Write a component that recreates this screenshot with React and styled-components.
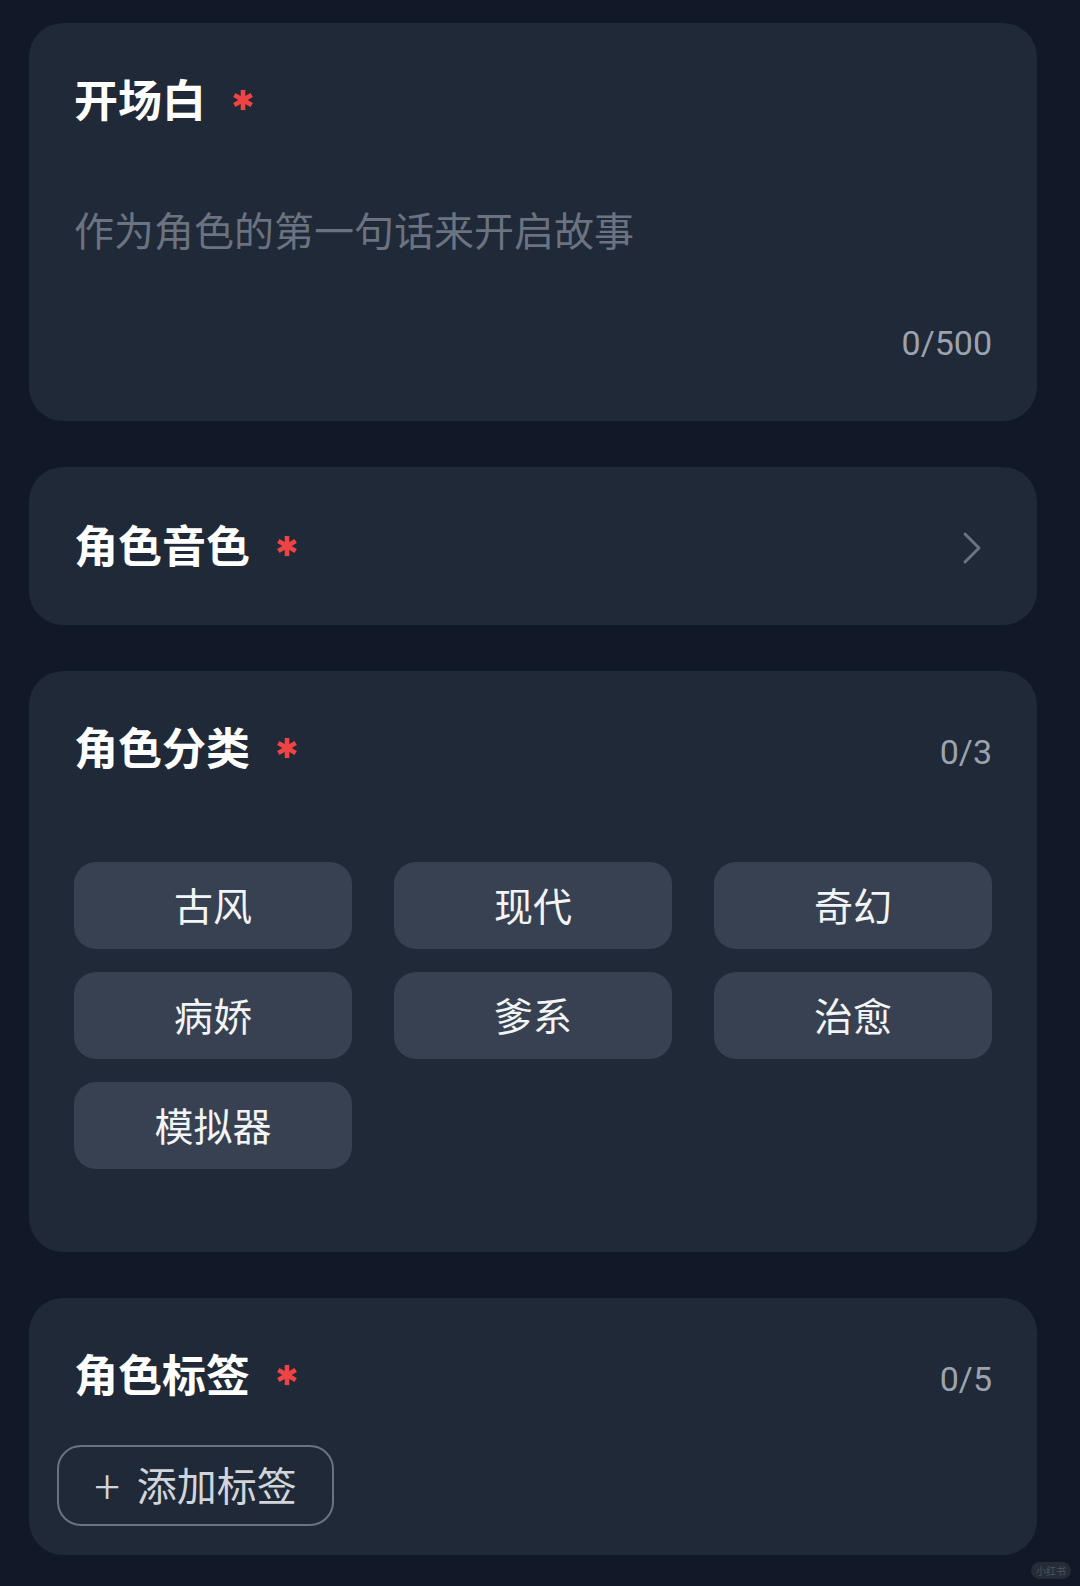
import React from 'react'
import styled, {createGlobalStyle} from 'styled-components'

const categories = ['古风', '现代', '奇幻', '病娇', '爹系', '治愈', '模拟器']

const Required = () => (
  <Star width='24' height='24' viewBox='0 0 24 24'>
    <g stroke='#ef4444' strokeWidth='5' strokeLinecap='butt'>
      <line x1='12' y1='1' x2='12' y2='23' />
      <line x1='2.5' y1='6.5' x2='21.5' y2='17.5' />
      <line x1='2.5' y1='17.5' x2='21.5' y2='6.5' />
    </g>
  </Star>
)

const App = () => {
  return (
    <>
      <GlobalStyle />
      <Page>
        <Card pad='45px 45px 55px'>
          <TitleRow>
            <Title>开场白</Title>
            <Required />
          </TitleRow>
          <Placeholder>作为角色的第一句话来开启故事</Placeholder>
          <Counter bottom>0/500</Counter>
        </Card>

        <VoiceCard>
          <TitleRow>
            <Title>角色音色</Title>
            <Required />
          </TitleRow>
          <Chevron width='20' height='34' viewBox='0 0 20 34'>
            <polyline points='3,3 17,17 3,31' fill='none' stroke='#6b7280' strokeWidth='3' strokeLinecap='round' strokeLinejoin='round' />
          </Chevron>
        </VoiceCard>

        <Card pad='45px 45px 83px'>
          <Header>
            <TitleRow>
              <Title>角色分类</Title>
              <Required />
            </TitleRow>
            <Counter>0/3</Counter>
          </Header>
          <ChipGrid>
            {categories.map(c => (
              <Chip key={c}>{c}</Chip>
            ))}
          </ChipGrid>
        </Card>

        <Card pad='45px 45px 29px'>
          <Header>
            <TitleRow>
              <Title>角色标签</Title>
              <Required />
            </TitleRow>
            <Counter>0/5</Counter>
          </Header>
          <AddButton>
            <Plus>+</Plus>
            添加标签
          </AddButton>
        </Card>

        <Watermark>小红书</Watermark>
      </Page>
    </>
  )
}

const GlobalStyle = createGlobalStyle`
  html, body {
    margin: 0;
    padding: 0;
    background: #111827;
  }
  body {
    font-family: "Noto Sans CJK SC", "Noto Sans", sans-serif;
  }
`

const Page = styled.div`
  position: relative;
  width: 1080px;
  min-height: 1586px;
  box-sizing: border-box;
  padding: 23px 43px 32px 29px;
  background: #111827;
  display: flex;
  flex-direction: column;
  gap: 46px;
`

const Card = styled.div`
  background: #1f2937;
  border-radius: 34px;
  padding: ${p => p.pad};
  display: flex;
  flex-direction: column;
`

const VoiceCard = styled.div`
  background: #1f2937;
  border-radius: 34px;
  height: 158px;
  box-sizing: border-box;
  padding: 0 55px 4px 45px;
  display: flex;
  align-items: center;
  justify-content: space-between;
`

const Header = styled.div`
  display: flex;
  align-items: center;
  justify-content: space-between;
  height: 60px;
`

const TitleRow = styled.div`
  display: flex;
  align-items: center;
  height: 60px;
`

const Title = styled.h2`
  margin: 0;
  font-size: 44px;
  line-height: 60px;
  font-weight: 700;
  color: #ffffff;
`

const Star = styled.svg`
  display: block;
  margin-left: 26px;
  margin-top: 4px;
  width: 22px;
  height: 22px;
`

const Placeholder = styled.div`
  margin-top: 73px;
  font-size: 40px;
  line-height: 56px;
  color: #6b7280;
`

const Counter = styled.div`
  margin-top: 12px;
  font-family: Roboto, "Noto Sans CJK SC", sans-serif;
  font-size: 34px;
  line-height: 46px;
  color: #9ca3af;
  ${p => p.bottom && `
    margin-top: 63px;
    margin-bottom: 0;
    align-self: flex-end;
  `}
`

const Chevron = styled.svg`
  display: block;
  margin-top: 8px;
`

const ChipGrid = styled.div`
  margin-top: 86px;
  display: grid;
  grid-template-columns: repeat(3, 1fr);
  column-gap: 42px;
  row-gap: 23px;
`

const Chip = styled.div`
  height: 87px;
  box-sizing: border-box;
  padding-bottom: 3px;
  border-radius: 22px;
  background: #374151;
  display: flex;
  align-items: center;
  justify-content: center;
  font-size: 39px;
  color: #f3f4f6;
`

const AddButton = styled.div`
  margin-top: 42px;
  margin-left: -17px;
  width: 277px;
  height: 81px;
  box-sizing: border-box;
  padding-bottom: 3px;
  border: 2px solid #6b7280;
  border-radius: 24px;
  display: flex;
  align-items: center;
  justify-content: center;
  gap: 17px;
  font-size: 40px;
  color: #d1d5db;
`

const Plus = styled.span`
  font-size: 48px;
  font-weight: 300;
  color: #d1d5db;
`

const Watermark = styled.div`
  position: absolute;
  right: 9px;
  bottom: 8px;
  padding: 1px 5px;
  border-radius: 9px;
  background: #262c36;
  font-size: 10px;
  color: #4b5563;
`

export default App
